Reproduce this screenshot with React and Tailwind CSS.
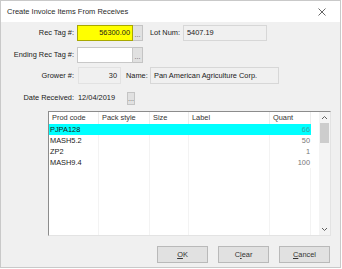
import React from 'react';

const rows = [
  { code: 'PJPA128', qty: '66', selected: true },
  { code: 'MASH5.2', qty: '50' },
  { code: 'ZP2', qty: '1' },
  { code: 'MASH9.4', qty: '100' },
];

// column widths in px: Prod code, Pack style, Size, Label, Quant
const cols = [
  { name: 'Prod code', w: 'w-[50px]' },
  { name: 'Pack style', w: 'w-[51px]' },
  { name: 'Size', w: 'w-[39px]' },
  { name: 'Label', w: 'w-[81px]' },
  { name: 'Quant', w: 'w-[41px]' },
];

function Dots({ className = '' }) {
  return (
    <div className={`flex items-end justify-center bg-[#e1e1e1] border border-[#c4c4c4] text-[7px] leading-[10px] text-[#555] ${className}`}>
      ...
    </div>
  );
}

function Label({ children, className = '' }) {
  return <div className={`w-[74px] shrink-0 text-right pr-[1px] ${className}`}>{children}</div>;
}

export default function App() {
  return (
    <div className="w-[342px] h-[269px] bg-white">
      <div className="w-[341px] h-[268px] border border-[#c9c9c9] bg-[#f0f0f0] flex flex-col font-['Liberation_Sans',Arial,sans-serif] text-[7.4px] text-[#1a1a1a] leading-none">
        {/* title bar */}
        <div className="h-[21px] shrink-0 bg-white flex items-center justify-between pl-[6px] pr-[14px]">
          <span className="text-[7.5px] text-[#2a2a2a]">Create Invoice Items From Receives</span>
          <svg width="8" height="8" viewBox="0 0 8 8" className="text-[#555]">
            <path d="M0.5 0.5 L7.5 7.5 M7.5 0.5 L0.5 7.5" stroke="currentColor" strokeWidth="0.9" />
          </svg>
        </div>

        {/* Rec Tag */}
        <div className="flex items-center mt-[3px] h-[16px]">
          <Label>Rec Tag #:</Label>
          <div className="ml-[2px] flex h-[16px]">
            <div className="w-[56px] h-full bg-[#ffff00] border border-[#a8a800] flex items-center justify-end pr-[2px]">
              56300.00
            </div>
            <Dots className="w-[10px] h-full border-l-0" />
          </div>
          <div className="ml-[7px] w-[33px]">Lot Num:</div>
          <div className="w-[84px] h-full border border-[#d7d7d7] flex items-center pl-[3px]">5407.19</div>
        </div>

        {/* Ending Rec Tag */}
        <div className="flex items-center mt-[6px] h-[16px]">
          <Label>Ending Rec Tag #:</Label>
          <div className="ml-[2px] flex h-[16px]">
            <div className="w-[56px] h-full bg-white border border-[#c8c8c8]" />
            <Dots className="w-[10px] h-full border-l-0" />
          </div>
        </div>

        {/* Grower */}
        <div className="flex items-center mt-[4px] h-[17px]">
          <Label>Grower #:</Label>
          <div className="ml-[3px] w-[43px] h-full border border-[#e2e2e2] flex items-center justify-end pr-[3px]">30</div>
          <div className="ml-[5px] w-[24px]">Name:</div>
          <div className="w-[129px] h-full border border-[#d7d7d7] flex items-center pl-[3px]">
            Pan American Agriculture Corp.
          </div>
        </div>

        {/* Date Received */}
        <div className="flex items-center mt-[7px] h-[14px]">
          <Label>Date Received:</Label>
          <div className="ml-[3px] w-[46px]">12/04/2019</div>
          <Dots className="w-[8px] h-[13px] ml-[3px]" />
        </div>

        {/* list */}
        <div className="ml-[47px] mt-[6px] w-[283px] h-[125px] bg-white border border-[#8c8c8c] border-r-[#e3e3e3] border-b-[#e3e3e3] flex">
          <div className="flex-1 flex flex-col">
            <div className="flex h-[12px] shrink-0">
              {cols.map((c) => (
                <div key={c.name} className={`${c.w} h-full border-r border-[#ececec] pl-[3px] flex items-center text-[#333]`}>
                  {c.name}
                </div>
              ))}
            </div>
            {rows.map((r) => {
              const bg = r.selected ? 'bg-[#00ffff]' : '';
              const sep = r.selected ? 'border-[#00ffff]' : 'border-[#f3f3f3]';
              return (
                <div key={r.code} className="flex h-[11px]">
                  <div className={`${cols[0].w} h-full border-r ${sep} ${bg} flex items-center pl-[1px]`}>{r.code}</div>
                  <div className={`${cols[1].w} h-full border-r ${sep} ${bg}`} />
                  <div className={`${cols[2].w} h-full border-r ${sep} ${bg}`} />
                  <div className={`${cols[3].w} h-full border-r ${sep} ${bg}`} />
                  <div className={`${cols[4].w} h-full ${bg} flex items-center justify-end pr-[1px] ${r.selected ? 'text-[#3aa3a3]' : 'text-[#777]'}`}>
                    {r.qty}
                  </div>
                </div>
              );
            })}
            <div className="flex flex-1">
              <div className={`${cols[0].w} h-full border-r border-[#f3f3f3]`} />
              <div className={`${cols[1].w} h-full border-r border-[#f3f3f3]`} />
              <div className={`${cols[2].w} h-full border-r border-[#f3f3f3]`} />
              <div className={`${cols[3].w} h-full border-r border-[#f3f3f3]`} />
              <div className={`${cols[4].w} h-full border-r border-[#f3f3f3]`} />
            </div>
          </div>
          {/* scrollbar */}
          <div className="w-[11px] shrink-0 bg-[#f4f4f4] flex flex-col items-center">
            <svg width="7" height="8" viewBox="0 0 7 8" className="mt-[2px]">
              <path d="M1 5 L3.5 2.5 L6 5" fill="none" stroke="#606060" strokeWidth="1" />
            </svg>
            <div className="w-[9px] h-[20px] bg-[#cdcdcd] mt-[1px]" />
            <div className="flex-1" />
            <svg width="7" height="8" viewBox="0 0 7 8" className="mb-[2px]">
              <path d="M1 3 L3.5 5.5 L6 3" fill="none" stroke="#606060" strokeWidth="1" />
            </svg>
          </div>
        </div>

        {/* buttons */}
        <div className="flex justify-end gap-[10px] mt-[10px] pr-[10px]">
          <button className="w-[51px] h-[17px] bg-[#e1e1e1] border border-[#b9b9b9] text-[7.4px] text-[#333]">
            <span className="underline">O</span>K
          </button>
          <button className="w-[51px] h-[17px] bg-[#e1e1e1] border border-[#b9b9b9] text-[7.4px] text-[#333]">
            C<span className="underline">l</span>ear
          </button>
          <button className="w-[51px] h-[17px] bg-[#e1e1e1] border border-[#b9b9b9] text-[7.4px] text-[#333]">
            <span className="underline">C</span>ancel
          </button>
        </div>
      </div>
    </div>
  );
}
